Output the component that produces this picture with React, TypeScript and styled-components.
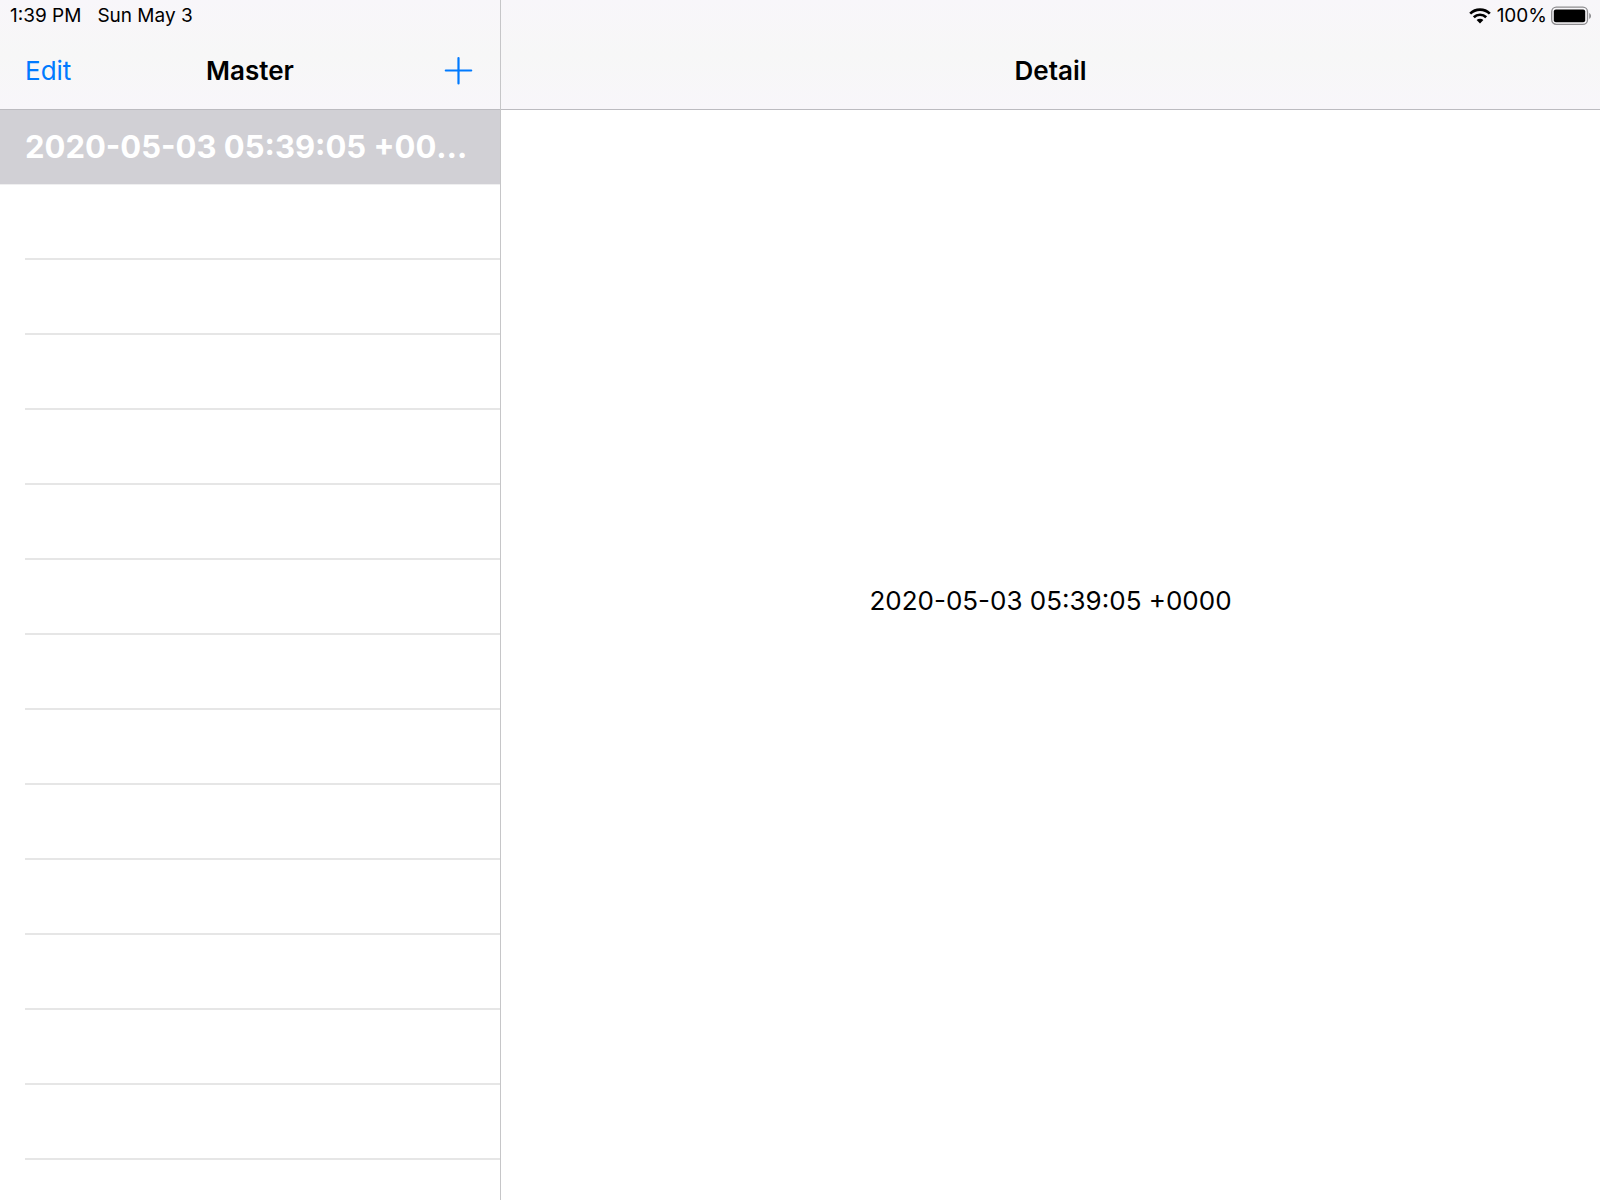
import React, { useState } from "react";
import styled, { createGlobalStyle } from "styled-components";

const GlobalStyle = createGlobalStyle`
  *, *::before, *::after { box-sizing: border-box; }
  body {
    margin: 0;
    background: #ffffff;
    color: #000000;
    font-family: Inter, "Liberation Sans", sans-serif;
  }
`;

const SplitView = styled.div`
  display: flex;
  min-height: 100vh;
`;

const MasterPane = styled.aside`
  flex: 0 0 501px;
  min-width: 0;
  display: flex;
  flex-direction: column;
  border-right: 1px solid #c6c6c8;
`;

const DetailPane = styled.main`
  flex: 1;
  min-width: 0;
  display: flex;
  flex-direction: column;
`;

const Header = styled.header`
  height: 110px;
  display: flex;
  flex-direction: column;
  background: linear-gradient(#f8f6fa, #f7f7f7 50%, #f8f6fa);
  border-bottom: 1px solid #bcbbc0;
`;

const StatusBar = styled.div<{ $align: "flex-start" | "flex-end" }>`
  height: 32px;
  padding: 0 8px 0 10px;
  display: flex;
  align-items: center;
  justify-content: ${({ $align }) => $align};
  font-size: 19px;
  line-height: 32px;
  white-space: nowrap;
`;

const StatusDate = styled.span`
  margin-left: 16px;
`;

const BatteryLevel = styled.span`
  margin: 0 4px 0 6px;
`;

const NavBar = styled.nav`
  height: 77px;
  padding: 0 25px;
  display: grid;
  grid-template-columns: 1fr auto 1fr;
  align-items: center;
`;

const Title = styled.h1`
  grid-column: 2;
  margin: 0;
  font-size: 26px;
  line-height: 32px;
  font-weight: 600;
`;

const BarButton = styled.button<{ $side: "start" | "end" }>`
  justify-self: ${({ $side }) => $side};
  display: flex;
  align-items: center;
  padding: 0;
  border: 0;
  background: none;
  color: #007aff;
  font: inherit;
  font-size: 26px;
  line-height: 32px;
  cursor: pointer;
`;

const List = styled.ul`
  flex: 1;
  margin: 0;
  padding: 0;
  list-style: none;
`;

const Row = styled.li`
  height: 75px;
  padding-left: 25px;

  &::after {
    content: "";
    display: block;
    height: 75px;
    border-bottom: 2px solid #e6e6e6;
  }
`;

const SelectedRow = styled.li`
  height: 75px;
  background: #d1d0d5;
  border-bottom: 1px solid #efeff0;
`;

const RowButton = styled.button`
  display: block;
  width: 100%;
  padding: 0 28px 0 25px;
  border: 0;
  background: none;
  color: #ffffff;
  font: inherit;
  font-size: 31px;
  font-weight: 700;
  line-height: 74px;
  text-align: left;
  cursor: pointer;
`;

const RowLabel = styled.span`
  display: block;
  overflow: hidden;
  text-overflow: ellipsis;
  white-space: nowrap;
`;

const DetailBody = styled.section`
  flex: 1;
  padding-bottom: 108px;
  display: flex;
  align-items: center;
  justify-content: center;
`;

const DetailText = styled.p`
  margin: 0;
  font-size: 26px;
  line-height: 32px;
`;

const WifiIcon = () => (
  <svg width="22" height="16" viewBox="0 0 22 16" aria-hidden="true">
    <g fill="none" stroke="#000000" strokeWidth="2.7">
      <path d="M1.2 5.6a13.9 13.9 0 0 1 19.6 0" />
      <path d="M4.8 9.3a8.8 8.8 0 0 1 12.4 0" />
    </g>
    <path d="M7.6 12.1a4.8 4.8 0 0 1 6.8 0L11 15.5z" fill="#000000" />
  </svg>
);

const BatteryIcon = () => (
  <svg width="41" height="20" viewBox="0 0 41 20" aria-hidden="true">
    <rect x="0.7" y="1.2" width="35.8" height="17.2" rx="4.6" fill="none" stroke="#8e8d90" strokeWidth="1.3" />
    <rect x="2.8" y="3.6" width="31.4" height="12.6" rx="2" fill="#000000" />
    <path d="M38.2 7v5.8c1.1-.5 1.8-1.6 1.8-2.9s-.7-2.4-1.8-2.9z" fill="#8e8d90" />
  </svg>
);

const PlusIcon = () => (
  <svg width="32" height="32" viewBox="0 0 32 32" aria-hidden="true">
    <path d="M15.5 3v25.4M2.8 15.5h25.4" stroke="#007aff" strokeWidth="2.2" strokeLinecap="round" />
  </svg>
);

const EMPTY_ROWS = 13;

export default function App() {
  const [events] = useState(["2020-05-03 05:39:05 +0000"]);
  const [selected, setSelected] = useState(events[0]);

  return (
    <>
      <GlobalStyle />
      <SplitView>
        <MasterPane>
          <Header>
            <StatusBar $align="flex-start">
              <span>1:39 PM</span>
              <StatusDate>Sun May 3</StatusDate>
            </StatusBar>
            <NavBar>
              <BarButton type="button" $side="start">Edit</BarButton>
              <Title>Master</Title>
              <BarButton type="button" $side="end" aria-label="Add">
                <PlusIcon />
              </BarButton>
            </NavBar>
          </Header>
          <List>
            {events.map((event) => (
              <SelectedRow key={event}>
                <RowButton type="button" onClick={() => setSelected(event)}>
                  <RowLabel>{event}</RowLabel>
                </RowButton>
              </SelectedRow>
            ))}
            {Array.from({ length: EMPTY_ROWS }, (_, i) => (
              <Row key={i} aria-hidden="true" />
            ))}
          </List>
        </MasterPane>
        <DetailPane>
          <Header>
            <StatusBar $align="flex-end">
              <WifiIcon />
              <BatteryLevel>100%</BatteryLevel>
              <BatteryIcon />
            </StatusBar>
            <NavBar>
              <Title as="h2">Detail</Title>
            </NavBar>
          </Header>
          <DetailBody>
            <DetailText>{selected}</DetailText>
          </DetailBody>
        </DetailPane>
      </SplitView>
    </>
  );
}
